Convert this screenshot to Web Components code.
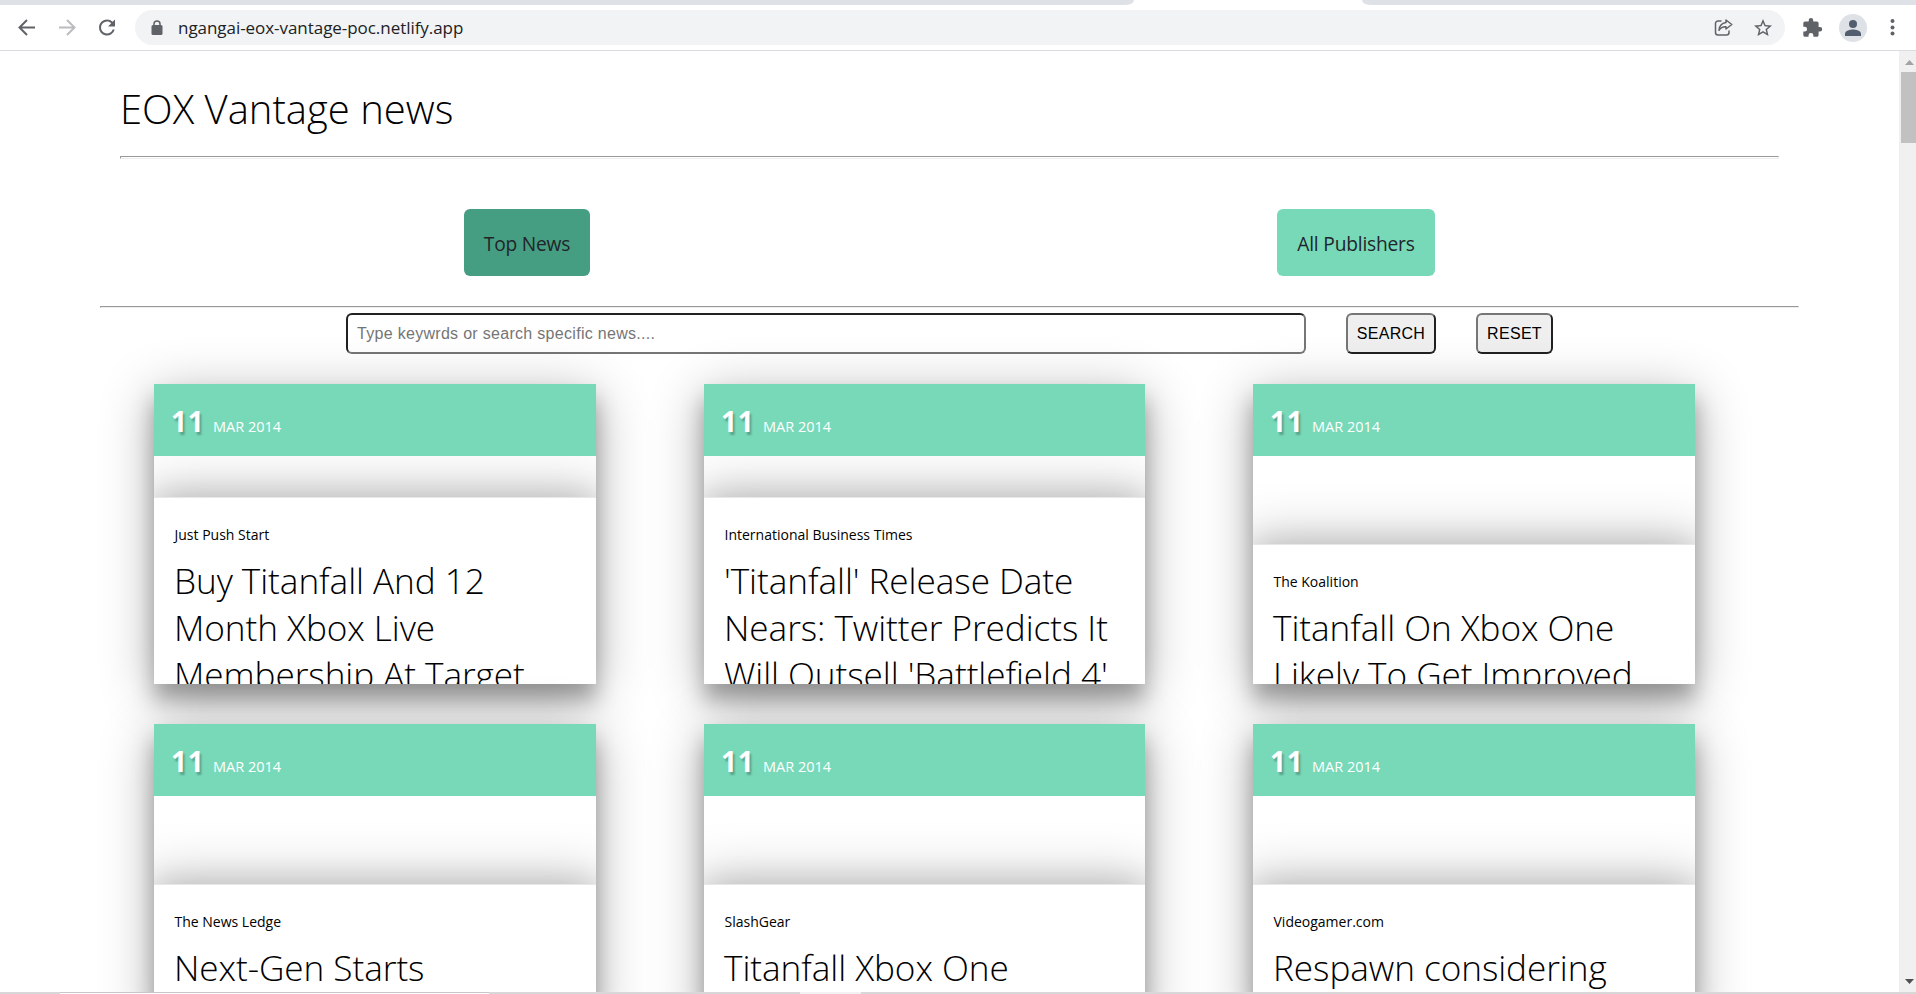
<!DOCTYPE html>
<html lang="en"><head><meta charset="utf-8"><title>EOX Vantage news</title>
<style>html,body{margin:0;height:100%;overflow:hidden;background:#fff}</style></head><body>
<news-browser></news-browser>
<script>
const define = (name, html) => customElements.define(name, class extends HTMLElement {
  constructor() {
    super();
    const t = document.createElement('template');
    t.innerHTML = html;
    this.attachShadow({mode: 'open'}).append(t.content.cloneNode(true));
  }
});

define('browser-toolbar', `<style>
:host{display:block;flex:none;height:51px;box-sizing:border-box;border-bottom:1px solid #dadce0;background:#fff;font:17px/35px "Open Sans",sans-serif;color:#202124}
.tabs{display:flex;justify-content:space-between;height:5px}
.tabs i{background:#dee1e6;height:5px}
.tabs i:first-child{width:1134px;border-bottom-right-radius:8px 5px}
.tabs i:last-child{width:554px;border-bottom-left-radius:8px 5px}
.row{display:flex;align-items:center;height:35px;margin-top:5px}
svg{display:block;flex:none}
.nav{display:flex;width:135px;box-sizing:border-box;padding-left:15px;gap:16px}
.omni{display:flex;align-items:center;width:1650px;height:35px;border-radius:18px;background:#f1f3f4;box-sizing:border-box;padding:0 10px 0 10px}
.url{flex:1;margin-left:9px;letter-spacing:-.05px}
.omni svg+svg{margin-left:17px}
.right{display:flex;align-items:center;margin-left:15px}
.avatar{width:28px;height:28px;border-radius:50%;background:#dee1e6;display:flex;align-items:center;justify-content:center;margin:0 13px 0 15px}
</style>
<div class="tabs"><i></i><i></i></div>
<div class="row">
 <div class="nav">
  <svg width="24" height="24" viewBox="0 0 24 24" fill="none" stroke="#5f6368" stroke-width="2"><path d="M20 11.500H5M12 4 4.500 11.500l7.500 7.500"/></svg>
  <svg width="24" height="24" viewBox="0 0 24 24" fill="none" stroke="#babcbe" stroke-width="2"><path d="M4 11.500h15M12 4l7.500 7.500-7.500 7.500"/></svg>
  <svg width="24" height="24" viewBox="0 0 24 24"><path fill="#5f6368" d="M17.650 5.850A7.960 7.960 0 0 0 12 3.500a8 8 0 1 0 7.730 10h-2.080A6 6 0 1 1 12 5.500c1.660 0 3.140.690 4.220 1.780L13 10.500h7v-7z"/></svg>
 </div>
 <div class="omni">
  <svg width="24" height="20" viewBox="0 0 24 20"><path fill="#5f6368" d="M8 7h8a1.500 1.500 0 0 1 1.500 1.500v7A1.500 1.500 0 0 1 16 17H8a1.500 1.500 0 0 1-1.500-1.500v-7A1.500 1.500 0 0 1 8 7z"/><path fill="none" stroke="#5f6368" stroke-width="1.500" d="M9 8V6a3 3 0 0 1 6 0v2"/></svg>
  <span class="url">ngangai-eox-vantage-poc.netlify.app</span>
  <svg width="20" height="20" viewBox="0 0 20 20" fill="none" stroke="#5f6368" stroke-width="1.500"><path d="M7.500 3H4a2.500 2.500 0 0 0-2.500 2.500v9A2.500 2.500 0 0 0 4 17h8.500a2.500 2.500 0 0 0 2.500-2.500v-2"/><path stroke-linejoin="round" d="M12 2l5.800 4.500L12 11V8.800C9 8.600 6.800 9.600 5 12.300c.3-4.200 2.700-7 7-7.700z"/></svg>
  <svg width="24" height="24" viewBox="0 0 24 24"><path fill="#5f6368" d="M22 9.240l-7.190-.620L12 2 9.190 8.630 2 9.240l5.460 4.730L5.820 21 12 17.270 18.180 21l-1.630-7.030L22 9.240zM12 15.400l-3.760 2.270 1-4.280-3.320-2.880 4.380-.380L12 6.100l1.710 4.040 4.380.380-3.320 2.880 1 4.280L12 15.400z" transform="translate(1.200 1.200) scale(.9)"/></svg>
 </div>
 <div class="right">
  <svg width="24" height="24" viewBox="0 0 24 24"><path fill="#5f6368" transform="translate(1.500 1) scale(.9)" d="M20.500 11H19V7c0-1.100-.9-2-2-2h-4V3.500a2.500 2.500 0 0 0-5 0V5H4c-1.100 0-1.990.9-1.990 2v3.800H3.500a2.700 2.700 0 0 1 0 5.400H2V20c0 1.100.9 2 2 2h3.800v-1.500a2.700 2.700 0 0 1 5.400 0V22H17c1.100 0 2-.9 2-2v-4h1.500a2.500 2.500 0 0 0 0-5z"/></svg>
  <span class="avatar"><svg width="24" height="24" viewBox="0 0 24 24" fill="#525d70"><circle cx="12" cy="8" r="4"/><path d="M4 20v-2.400C4 14.600 9.300 13.400 12 13.400s8 1.200 8 4.200V20z"/></svg></span>
  <svg width="24" height="24" viewBox="0 0 24 24" fill="#5f6368"><circle cx="12.500" cy="5" r="2"/><circle cx="12.500" cy="11.500" r="2"/><circle cx="12.500" cy="17.500" r="2"/></svg>
 </div>
</div>`);

define('scroll-track', `<style>
:host{display:flex;flex-direction:column;align-items:flex-end;width:17px;background:#f0f0f0;flex:none}
svg{display:block;width:15px;height:21px}
.thumb{width:15px;height:71px;background:#c1c1c1}
.rest{flex:1}
</style>
<svg viewBox="0 0 15 21"><path d="M4 14h9L8.500 9z" fill="#a3a3a3"/></svg><div class="thumb"></div><div class="rest"></div><svg viewBox="0 0 15 21"><path d="M4 8h9l-4.500 5z" fill="#505050"/></svg>`);

define('tab-button', `<style>
:host{display:block;width:158px;height:67px;border-radius:6px;background:#78d9b9;text-align:center;font:19.200px/70px "Open Sans",sans-serif;letter-spacing:-.2px;color:#212529;white-space:nowrap}
:host([active]){width:126px;background:#469e82}
</style><slot></slot>`);

define('search-bar', `<style>
:host{display:flex;height:41px;margin:5px 0 0 346px;font:16px "Liberation Sans",Arial,sans-serif}
input,button{font:inherit;letter-spacing:.3px;box-sizing:border-box;height:41px;border-radius:6px;margin:0}
input{width:960px;border:2px inset #767676;padding:0 9px;background:#fff}
input::placeholder{color:#757575}
button{border:2px outset #767676;background:#efefef;color:#000;padding:0;margin-left:40px;width:90px}
button:last-child{width:77px}
</style><input placeholder="Type keywrds or search specific news...."><button>SEARCH</button><button>RESET</button>`);

define('news-card', `<style>
:host{display:block;height:300px;box-shadow:rgba(0,0,0,.3) 0 10px 50px,rgba(0,0,0,.28) 0 16px 20px;color:#000;font-family:"Open Sans",sans-serif}
.clip{display:flex;flex-direction:column;height:300px;overflow:hidden;background:#fff}
header{flex:none;height:72px;box-sizing:border-box;background:#78d9b9;color:#fff;padding:17px 0 0 17px;font-size:14.500px;line-height:40px;z-index:1;position:relative;white-space:nowrap}
b{font-size:28px;font-weight:700;letter-spacing:.8px;text-shadow:2px 3px 2px rgba(0,0,0,.25);margin-right:8.400px}
.body{margin-top:var(--gap);flex:none;height:400px;padding:26px 20px;background:#fff;box-shadow:rgba(0,0,0,.22) 0 -4px 50px 4px,rgba(0,0,0,.1) 0 -5px 25px;border-top:1px solid #e8e8e8}
.pub{font-size:14px;line-height:21px;padding-left:.5px}
h1{margin:12px 0 0;font-weight:300;font-size:35.200px;letter-spacing:-.07px;line-height:47px;white-space:nowrap}
</style><div class="clip"><header><b>11</b><span>MAR 2014</span></header>
<div class="body"><div class="pub"><slot name="publisher"></slot></div><h1><slot></slot></h1></div></div>`);

define('news-page', `<style>
:host{display:block;flex:1;overflow:hidden;font-family:"Open Sans",sans-serif;color:#000}
h1{margin:0 0 0 120px;padding-top:26px;height:79px;font-weight:300;font-size:40px;line-height:64px}
hr{margin:0;box-sizing:border-box;height:3px;border:1px solid;border-color:#999 #eee #eee #999}
.first{margin:0 120px 0 120px}
.second{margin:30px 100px 0 100px;height:2px}
.tabs{display:flex;padding:50px 0 0 464px;gap:687px}
.grid{display:grid;grid-template-columns:442px 441px 442px;column-gap:108px;row-gap:40px;margin:30px 0 0 154px}
</style>
<h1>EOX Vantage news</h1><hr class="first">
<div class="tabs"><tab-button active>Top News</tab-button><tab-button>All Publishers</tab-button></div>
<hr class="second"><search-bar></search-bar>
<div class="grid">
<news-card style="--gap:41px"><span slot="publisher">Just Push Start</span>Buy Titanfall And 12<br>Month Xbox Live<br>Membership At Target</news-card>
<news-card style="--gap:41px"><span slot="publisher">International Business Times</span>'Titanfall' Release Date<br>Nears: Twitter Predicts It<br>Will Outsell 'Battlefield 4'</news-card>
<news-card style="--gap:88px"><span slot="publisher">The Koalition</span>Titanfall On Xbox One<br>Likely To Get Improved</news-card>
<news-card style="--gap:88px"><span slot="publisher">The News Ledge</span>Next-Gen Starts</news-card>
<news-card style="--gap:88px"><span slot="publisher">SlashGear</span>Titanfall Xbox One</news-card>
<news-card style="--gap:88px"><span slot="publisher">Videogamer.com</span>Respawn considering</news-card>
</div>`);

define('news-browser', `<style>
:host{display:flex;flex-direction:column;width:1916px;height:994px;overflow:hidden;background:#fff}
main{display:flex;flex:1;min-height:0}
footer{display:flex;flex:none;height:2px;background:#d8d8d8}
footer i{box-sizing:border-box;height:2px;border-top:1px solid #c8c8c8;background:#fff;width:429px;margin-left:60px}
footer i+i{width:61px;margin-left:311px;border:0;background:#f2f2f2}
</style><browser-toolbar></browser-toolbar><main><news-page></news-page><scroll-track></scroll-track></main><footer><i></i><i></i></footer>`);
</script></body></html>
